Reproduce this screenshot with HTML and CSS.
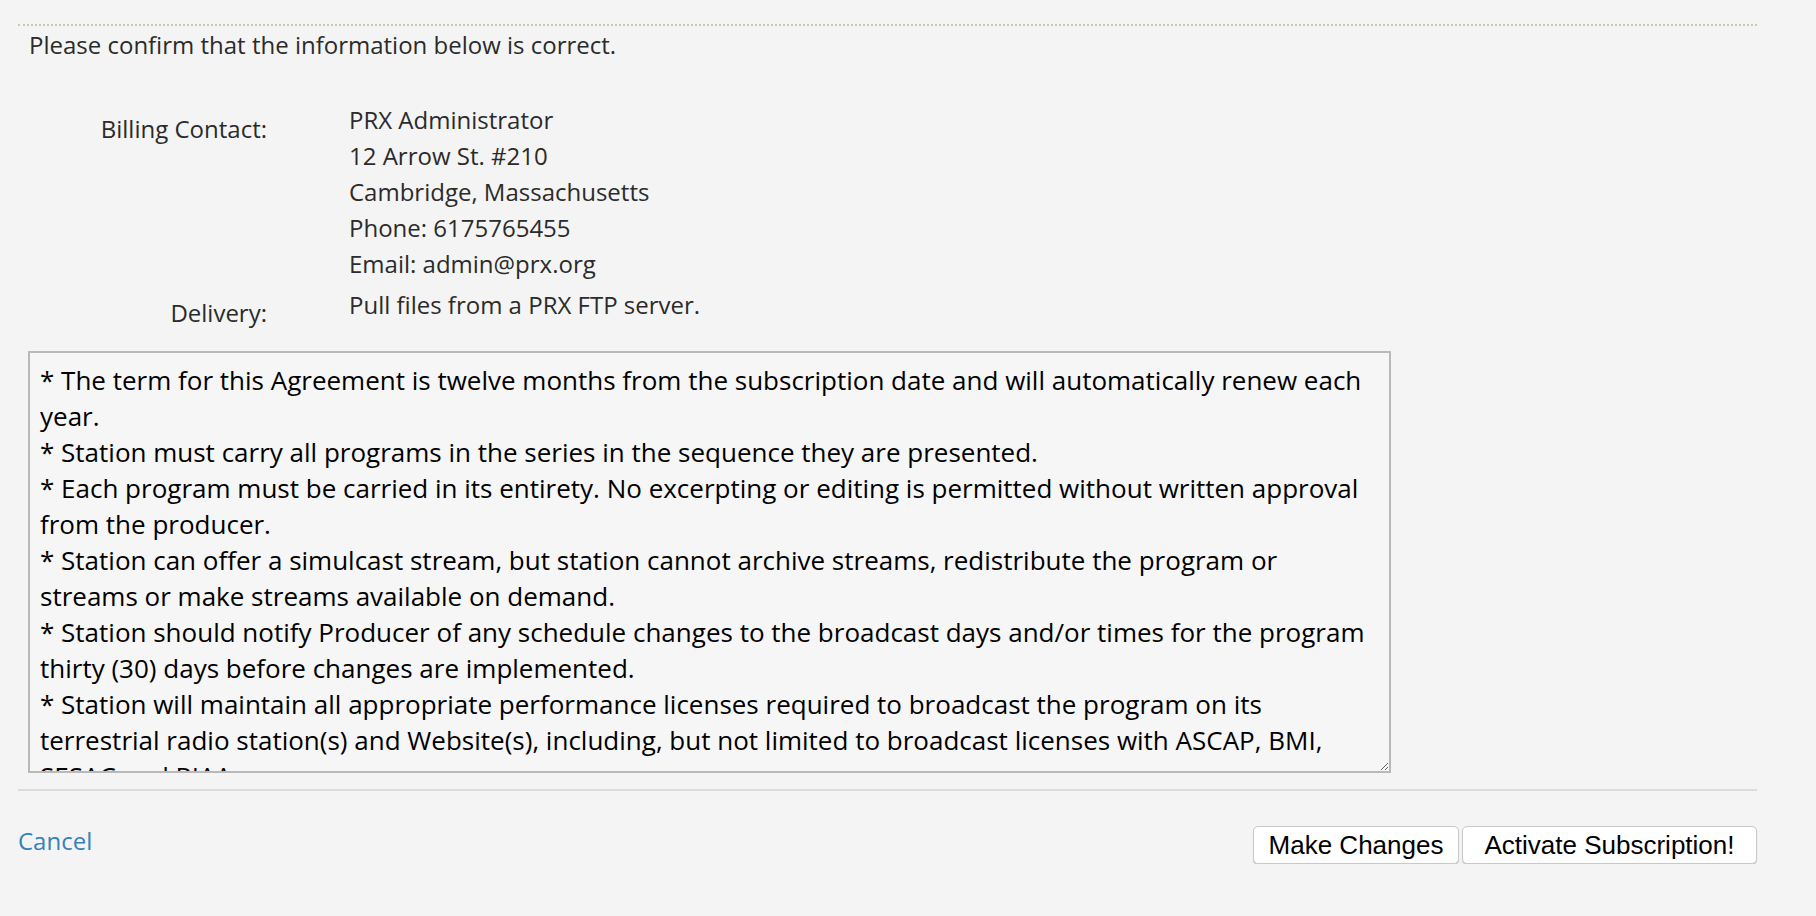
FILE: index.html
```html
<!DOCTYPE html>
<html lang="en">
<head>
<meta charset="utf-8">
<title>Confirm Subscription</title>
<link rel="stylesheet" href="styles.css">
</head>
<body>
<div class="page">
  <div class="title-clip">
    <h1 class="title">Subscribe (The Moth Radio)</h1>
  </div>
  <div class="panel">
    <p class="intro">Please confirm that the information below is correct.</p>
    <dl class="details">
      <dt class="label">Billing Contact:</dt>
      <dd class="value">PRX Administrator<br>12 Arrow St. #210<br>Cambridge, Massachusetts<br>Phone: 6175765455<br>Email: admin@prx.org</dd>
      <dt class="label label-delivery">Delivery:</dt>
      <dd class="value">Pull files from a PRX FTP server.</dd>
    </dl>
    <textarea class="terms" readonly>* The term for this Agreement is twelve months from the subscription date and will automatically renew each year.
* Station must carry all programs in the series in the sequence they are presented.
* Each program must be carried in its entirety. No excerpting or editing is permitted without written approval from the producer.
* Station can offer a simulcast stream, but station cannot archive streams, redistribute the program or streams or make streams available on demand.
* Station should notify Producer of any schedule changes to the broadcast days and/or times for the program thirty (30) days before changes are implemented.
* Station will maintain all appropriate performance licenses required to broadcast the program on its terrestrial radio station(s) and Website(s), including, but not limited to broadcast licenses with ASCAP, BMI, SESAC and RIAA.
* Station will credit the program and producer on air and on its Website.</textarea>
  </div>
  <hr class="divider">
  <div class="actions">
    <a class="cancel" href="#">Cancel</a>
    <div class="buttons">
      <button class="btn btn-changes" type="button">Make Changes</button>
      <button class="btn btn-activate" type="button">Activate Subscription!</button>
    </div>
  </div>
</div>
</body>
</html>
```
FILE: styles.css
```css
* {
  box-sizing: border-box;
}

html,
body {
  margin: 0;
  padding: 0;
}

body {
  background: #f4f4f4;
  font-family: "Open Sans", "Noto Sans", sans-serif;
  font-size: 24px;
  color: #2b2b2b;
}

.page {
  width: 1739px;
  margin-left: 18px;
}

.title-clip {
  height: 2px;
  overflow: hidden;
}

.title {
  margin: -36px 0 0;
  padding-left: 528px;
  font-size: 28px;
  line-height: 40px;
  font-weight: 400;
  color: #3a87c0;
  white-space: nowrap;
}

.panel {
  margin-top: 22px;
  border-top: 2px dotted #c9c9ab;
}

.intro {
  margin: 1px 0 0 11px;
  line-height: 36px;
}

.details {
  display: grid;
  grid-template-columns: 249px 1fr;
  column-gap: 82px;
  row-gap: 5px;
  margin: 39px 0 0;
}

.label {
  text-align: right;
  padding-top: 9px;
  line-height: 36px;
}

.label-delivery {
  padding-top: 8px;
}

.value {
  margin: 0;
  line-height: 36px;
}

.terms {
  display: block;
  width: 1363px;
  height: 422px;
  margin: 20px 0 0 10px;
  padding: 9px 21px 0 10px;
  border: 2px solid #b9b9b9;
  background: #f6f6f6;
  color: #000;
  font-family: "Open Sans", "Noto Sans", sans-serif;
  font-size: 26px;
  line-height: 36px;
  overflow: hidden;
  resize: both;
  outline: none;
}

.divider {
  height: 0;
  margin: 16px 0 0;
  border: 0;
  border-top: 2px solid #dcdcdc;
}

.actions {
  display: flex;
  justify-content: space-between;
  align-items: flex-start;
  padding-top: 35px;
}

.cancel {
  margin-top: -3px;
  line-height: 36px;
  color: #3282bc;
  text-decoration: none;
}

.buttons {
  display: flex;
  gap: 3px;
}

.btn {
  height: 38px;
  padding: 0;
  background: #fff;
  border: 1px solid #c9c9c9;
  border-radius: 5px;
  box-shadow: 0 1px 1px rgba(0, 0, 0, 0.18);
  font-family: "Liberation Sans", Arial, sans-serif;
  font-size: 26px;
  color: #000;
  text-align: center;
}

.btn-changes {
  width: 206px;
}

.btn-activate {
  width: 295px;
}
```
